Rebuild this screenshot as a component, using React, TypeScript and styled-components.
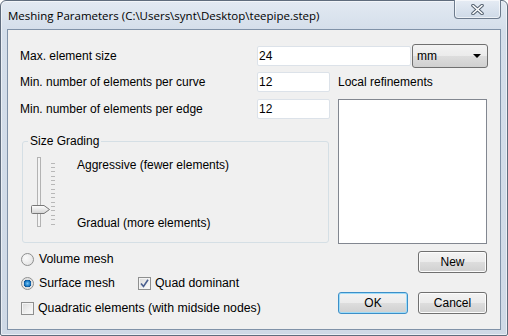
import styled, { createGlobalStyle } from "styled-components";

const GlobalStyle = createGlobalStyle`
  html, body {
    margin: 0;
    padding: 0;
    background: #ffffff;
  }
  body {
    font-family: "Liberation Sans", Arial, sans-serif;
    font-size: 12px;
    color: #000000;
  }
`;

const Window = styled.div`
  width: 508px;
  height: 336px;
  box-sizing: border-box;
  border: 1px solid #5f6c7d;
  border-radius: 6px 6px 2px 2px;
  background: linear-gradient(180deg, #e2e9f2 0%, #d4deea 30px, #cfd9e6 100%);
  box-shadow: inset 0 0 0 1px rgba(255, 255, 255, 0.55);
  padding: 0 6px 5px;
  display: flex;
  flex-direction: column;
`;

const TitleBar = styled.div`
  height: 28px;
  flex-shrink: 0;
  display: flex;
  justify-content: space-between;
  align-items: flex-start;
`;

const Title = styled.div`
  margin: 7px 0 0 1px;
  line-height: 15px;
  font-family: "Open Sans", "Liberation Sans", sans-serif;
  font-size: 11.5px;
  white-space: nowrap;
`;

const CloseButton = styled.div`
  width: 47px;
  height: 19px;
  margin-top: -1px;
  box-sizing: border-box;
  border: 1px solid #6d7b8d;
  border-top: none;
  border-radius: 0 0 4px 4px;
  background: linear-gradient(180deg, #e6ecf4 0%, #dae3ee 50%, #cfdae7 100%);
  box-shadow: inset 0 0 0 1px rgba(255, 255, 255, 0.6);
  display: flex;
  align-items: center;
  justify-content: center;
`;

const Client = styled.div`
  flex: 1;
  border: 1px solid #8092a8;
  background: #f0f0f0;
  padding: 14px 12px 0;
  display: flex;
  flex-direction: column;
`;

const TopRow = styled.div`
  display: flex;
  align-items: center;
  height: 24px;
`;

const FormRow = styled.div<{ $top: number }>`
  display: flex;
  align-items: center;
  height: 20px;
  margin-top: ${({ $top }) => $top}px;
`;

const FieldLabel = styled.div`
  width: 237px;
  flex-shrink: 0;
  line-height: 14px;
  white-space: nowrap;
`;

const TextInput = styled.input<{ $width?: number }>`
  ${({ $width }) => ($width ? `width: ${$width}px;` : "flex: 1; min-width: 0;")}
  height: 20px;
  box-sizing: border-box;
  border: 1px solid #dce2e9;
  border-radius: 2px;
  background: #ffffff;
  padding: 0 1px;
  margin: 0;
  font: inherit;
  color: #000000;
  outline: none;
`;

const Dropdown = styled.div`
  width: 76px;
  height: 24px;
  flex-shrink: 0;
  margin-left: 1px;
  box-sizing: border-box;
  border: 1px solid #707070;
  border-radius: 3px;
  background: linear-gradient(180deg, #f3f3f3 0%, #ebebeb 50%, #dddddd 51%, #d0d0d0 100%);
  display: flex;
  align-items: center;
  justify-content: space-between;
  padding: 0 6px 0 4px;
`;

const Arrow = styled.span`
  width: 0;
  height: 0;
  border-left: 4px solid transparent;
  border-right: 4px solid transparent;
  border-top: 4px solid #000000;
`;

const SideLabel = styled.div`
  margin-left: 8px;
  line-height: 14px;
  white-space: nowrap;
`;

const Body = styled.div`
  display: flex;
  gap: 8px;
  margin-top: 7px;
`;

const LeftCol = styled.div`
  width: 310px;
  flex-shrink: 0;
  display: flex;
  flex-direction: column;
`;

const RightCol = styled.div`
  width: 149px;
  display: flex;
  flex-direction: column;
  align-items: flex-end;
`;

const GroupBox = styled.div`
  margin: 22px 0 0 2px;
  width: 307px;
  height: 102px;
  box-sizing: border-box;
  border: 1px solid #d5dfe5;
  border-radius: 3px;
`;

const Legend = styled.div`
  width: fit-content;
  margin: -8px 0 0 5px;
  padding: 0 2px;
  background: #f0f0f0;
  line-height: 14px;
`;

const GradingRow = styled.div`
  display: flex;
  margin-top: 6px;
`;

const SliderArt = styled.svg`
  margin-left: 7px;
  flex-shrink: 0;
`;

const GradeTexts = styled.div`
  margin: 4px 0 0 17px;
  height: 72px;
  display: flex;
  flex-direction: column;
  justify-content: space-between;
  line-height: 14px;
`;

const OptionRow = styled.div<{ $top: number }>`
  display: flex;
  align-items: center;
  height: 20px;
  margin-top: ${({ $top }) => $top}px;
`;

const Option = styled.div<{ $width?: number }>`
  display: flex;
  align-items: center;
  ${({ $width }) => ($width ? `width: ${$width}px;` : "")}
  line-height: 14px;
  font-size: 12.3px;
  white-space: nowrap;
`;

const RadioDot = styled.span<{ $on?: boolean }>`
  width: 13px;
  height: 13px;
  box-sizing: border-box;
  margin: 0 5px 0 1px;
  border-radius: 50%;
  border: 1px solid #8e8f8f;
  background: ${({ $on }) =>
    $on
      ? "radial-gradient(circle at 50% 50%, #7cc4f2 0, #1b7fcb 2.5px, #0b4f91 3.6px, #dcdcdc 4px, #f4f4f4 100%)"
      : "radial-gradient(circle at 35% 35%, #fbfbfb 0, #e7e7e7 70%, #d6d6d6 100%)"};
`;

const CheckBox = styled.span<{ $gap: number }>`
  width: 13px;
  height: 13px;
  box-sizing: border-box;
  margin: 0 ${({ $gap }) => $gap}px 0 1px;
  border: 1px solid #8e8f8f;
  box-shadow: inset 0 0 0 1px #f4f4f4;
  background: linear-gradient(135deg, #d9d9d9 0%, #f0f0f0 60%, #fbfbfb 100%);
  display: flex;
  align-items: center;
  justify-content: center;
`;

const ListBox = styled.div`
  width: 149px;
  height: 145px;
  box-sizing: border-box;
  border: 1px solid #828790;
  background: #ffffff;
`;

const Button = styled.button<{ $primary?: boolean; $width: number }>`
  width: ${({ $width }) => $width}px;
  height: 22px;
  box-sizing: border-box;
  margin: 0;
  padding: 0;
  border: 1px solid ${({ $primary }) => ($primary ? "#3c8fc8" : "#707070")};
  border-radius: 3px;
  background: linear-gradient(180deg, #f3f3f3 0%, #ebebeb 50%, #dddddd 51%, #d0d0d0 100%);
  box-shadow: ${({ $primary }) => ($primary ? "inset 0 0 0 1px #9fdcf8" : "inset 0 0 0 1px #fcfcfc")};
  font: inherit;
  color: #000000;
`;

const NewButton = styled(Button)`
  margin-top: 7px;
`;

const ButtonRow = styled.div`
  display: flex;
  gap: 10px;
  margin-top: 19px;
`;

function CloseGlyph() {
  const d = "M2 1.5 L11 9.5 M11 1.5 L2 9.5";
  return (
    <svg width="13" height="11" viewBox="0 0 13 11">
      <path d={d} stroke="#53606f" strokeWidth="3.6" strokeLinecap="round" />
      <path d={d} stroke="#ffffff" strokeWidth="1.6" strokeLinecap="round" />
    </svg>
  );
}

function Slider() {
  const ticks = Array.from({ length: 15 }, (_, i) => 8.5 + i * 4.36);
  return (
    <SliderArt width="30" height="76" viewBox="0 0 30 76">
      <rect x="7.5" y="3.5" width="3" height="69" fill="#f4f4f4" stroke="#b3b3b3" />
      {ticks.map((y) => (
        <line key={y} x1="21" x2="25" y1={Math.round(y) + 0.5} y2={Math.round(y) + 0.5} stroke="#b8b8b8" />
      ))}
      <defs>
        <linearGradient id="thumb" x1="0" y1="0" x2="0" y2="1">
          <stop offset="0" stopColor="#ffffff" />
          <stop offset="1" stopColor="#d2d2d2" />
        </linearGradient>
      </defs>
      <path
        d="M2.5 51.5 H14 L19.5 55.5 L14 59.5 H2.5 Q1.5 59.5 1.5 58.5 V52.5 Q1.5 51.5 2.5 51.5 Z"
        fill="url(#thumb)"
        stroke="#777777"
      />
    </SliderArt>
  );
}

function CheckMark() {
  return (
    <svg width="9" height="9" viewBox="0 0 9 9">
      <path d="M1 4.5 L3.5 7.5 L8 0.8" fill="none" stroke="#4a5f8f" strokeWidth="1.6" />
    </svg>
  );
}

export default function App() {
  return (
    <>
      <GlobalStyle />
      <Window>
        <TitleBar>
          <Title>Meshing Parameters (C:\Users\synt\Desktop\teepipe.step)</Title>
          <CloseButton>
            <CloseGlyph />
          </CloseButton>
        </TitleBar>
        <Client>
          <TopRow>
            <FieldLabel>Max. element size</FieldLabel>
            <TextInput readOnly value="24" />
            <Dropdown>
              <span>mm</span>
              <Arrow />
            </Dropdown>
          </TopRow>
          <FormRow $top={4}>
            <FieldLabel>Min. number of elements per curve</FieldLabel>
            <TextInput $width={73} readOnly value="12" />
            <SideLabel>Local refinements</SideLabel>
          </FormRow>
          <Body>
            <LeftCol>
              <FormRow $top={0}>
                <FieldLabel>Min. number of elements per edge</FieldLabel>
                <TextInput $width={73} readOnly value="12" />
              </FormRow>
              <GroupBox>
                <Legend>Size Grading</Legend>
                <GradingRow>
                  <Slider />
                  <GradeTexts>
                    <span>Aggressive (fewer elements)</span>
                    <span>Gradual (more elements)</span>
                  </GradeTexts>
                </GradingRow>
              </GroupBox>
              <OptionRow $top={6}>
                <Option>
                  <RadioDot />
                  Volume mesh
                </Option>
              </OptionRow>
              <OptionRow $top={4}>
                <Option $width={117}>
                  <RadioDot $on />
                  Surface mesh
                </Option>
                <Option>
                  <CheckBox $gap={4}>
                    <CheckMark />
                  </CheckBox>
                  Quad dominant
                </Option>
              </OptionRow>
              <OptionRow $top={5}>
                <Option>
                  <CheckBox $gap={4} />
                  Quadratic elements (with midside nodes)
                </Option>
              </OptionRow>
            </LeftCol>
            <RightCol>
              <ListBox />
              <NewButton $width={69}>New</NewButton>
              <ButtonRow>
                <Button $primary $width={70}>
                  OK
                </Button>
                <Button $width={69}>Cancel</Button>
              </ButtonRow>
            </RightCol>
          </Body>
        </Client>
      </Window>
    </>
  );
}
